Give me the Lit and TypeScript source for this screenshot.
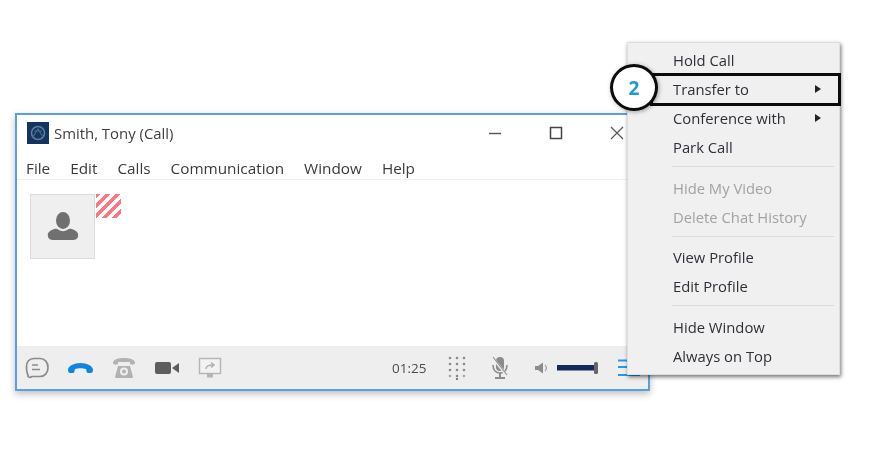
import { LitElement, html, css, svg } from "lit";
import { customElement } from "lit/decorators.js";

const ico = (w: number, h: number, body: unknown) =>
  html`<svg width=${w} height=${h} viewBox="0 0 ${w} ${h}">${body}</svg>`;

const dots = [3, 9, 15].flatMap((y) =>
  [2, 9, 16].map((x) => svg`<circle cx=${x} cy=${y} r="1.3" fill="#8a8a8a"/>`)
);

@customElement("app-root")
export class AppRoot extends LitElement {
  static styles = css`
    :host {
      display: block;
      width: 888px;
      height: 454px;
      background: #fff;
      overflow: hidden;
      font-family: "Open Sans", "Noto Sans", sans-serif;
      color: #333;
    }
    .stage {
      position: relative;
      width: 888px;
      height: 454px;
      box-sizing: border-box;
      padding: 113px 0 0 15px;
      filter: blur(0.4px);
    }
    .win {
      width: 635px;
      height: 278px;
      box-sizing: border-box;
      border: 2px solid #5b9fdc;
      background: #fff;
      box-shadow: 0 3px 7px rgba(0, 0, 0, 0.25);
      display: flex;
      flex-direction: column;
    }
    .title {
      height: 36px;
      flex: none;
      display: flex;
      align-items: center;
      padding-left: 10px;
      gap: 5px;
      font-size: 14.9px;
      color: #3f3f3f;
    }
    .ctrls {
      margin-left: auto;
      display: flex;
      align-items: center;
      padding-right: 24px;
      gap: 47px;
    }
    .ctrls svg { display: block; }
    .menubar {
      height: 29px;
      flex: none;
      display: flex;
      align-items: center;
      gap: 20px;
      padding: 5px 0 0 9px;
      font-size: 15.3px;
      font-weight: 500;
      color: #3a3a3a;
      border-bottom: 1px solid #f0f0f0;
      box-sizing: border-box;
    }
    .body {
      flex: 1;
      padding: 14px 0 0 13px;
      display: flex;
      align-items: flex-start;
    }
    .avatar {
      width: 65px;
      height: 65px;
      background: #efefef;
      border: 1px solid #dcdcdc;
      box-sizing: border-box;
      display: flex;
      align-items: center;
      justify-content: center;
    }
    .stripes {
      width: 25px;
      height: 24px;
      margin-left: 1px;
      background: repeating-linear-gradient(
        135deg,
        #fb7681 0 3.5px,
        #fff 3.5px 7px
      );
    }
    .bar {
      height: 43px;
      flex: none;
      background: #eee;
      display: flex;
      align-items: center;
      padding-left: 8px;
      font-size: 13.5px;
      color: #4d4d4d;
    }
    .bar svg { display: block; flex: none; }
    .left { display: flex; align-items: center; gap: 18px; }
    .time { margin-left: 170px; width: 36px; }
    .dial { margin-left: 20px; }
    .mic { margin-left: 25px; }
    .vol { margin-left: 25px; }
    .menuicon { margin-left: 17px; }
    .menu {
      position: absolute;
      left: 627px;
      top: 42px;
      width: 213px;
      height: 333px;
      box-sizing: border-box;
      background: #f0f0f0;
      border: 1px solid #dedede;
      box-shadow: 1px 2px 4px rgba(0, 0, 0, 0.55);
      padding-top: 3px;
      font-size: 14.8px;
      font-weight: 500;
      color: #2f2f38;
    }
    .item {
      height: 29px;
      line-height: 29px;
      padding-left: 45px;
      position: relative;
    }
    .item.off { color: #a2a2a2; }
    .arrow {
      position: absolute;
      right: 18px;
      top: 10px;
      width: 0;
      height: 0;
      border-left: 6px solid #222;
      border-top: 4px solid transparent;
      border-bottom: 4px solid transparent;
    }
    .sep {
      height: 1px;
      background: #dcdcdc;
      margin: 4px 5px 6.5px 44px;
    }
    .hl {
      position: absolute;
      left: 650px;
      top: 73px;
      width: 191px;
      height: 33px;
      box-sizing: border-box;
      border: 3.5px solid #0c0c0c;
      pointer-events: none;
    }
    .badge {
      position: absolute;
      left: 610px;
      top: 64px;
      width: 48px;
      height: 47px;
      box-sizing: border-box;
      border-radius: 50%;
      border: 3.5px solid #0c0c0c;
      background: #fff;
      box-shadow: 1px 1px 4px rgba(0, 0, 0, 0.35);
      display: flex;
      align-items: center;
      justify-content: center;
      font-size: 19px;
      font-weight: 700;
      color: #1c9ad6;
    }
  `;

  render() {
    return html`<div class="stage">
      <div class="win">
        <div class="title">
          ${ico(22, 22, svg`
            <rect width="22" height="22" fill="#12345f"/>
            <circle cx="11" cy="11" r="6.5" fill="none" stroke="#5f7f9f" stroke-width="1.5"/>
            <path d="M6 15 L11 7 L16 15 M7 9 H15" fill="none" stroke="#46688c" stroke-width="1.2"/>`)}
          <span>Smith, Tony (Call)</span>
          <div class="ctrls">
            ${ico(14, 14, svg`<path d="M1 7.5H13" stroke="#555" stroke-width="1.4"/>`)}
            ${ico(14, 14, svg`<rect x="1.5" y="1.5" width="11" height="11" fill="none" stroke="#444" stroke-width="1.5"/>`)}
            ${ico(14, 14, svg`<path d="M1 1L13 13M13 1L1 13" stroke="#555" stroke-width="1.2"/>`)}
          </div>
        </div>
        <div class="menubar">
          <span>File</span><span>Edit</span><span>Calls</span><span>Communication</span><span>Window</span><span>Help</span>
        </div>
        <div class="body">
          <div class="avatar">
            ${ico(32, 32, svg`
              <ellipse cx="16" cy="9.5" rx="7" ry="8.5" fill="#707070"/>
              <path d="M6 18.5 C8 17 11 18 12 19 C14 20.5 18 20.5 20 19 C21 18 24 17 26 18.5 C29 19.5 32 22 31 25 C31 28 28 29 26 29 H6 C4 29 1 28 1 25 C0 22 3 19.5 6 18.5Z" fill="#707070"/>`)}
          </div>
          <div class="stripes"></div>
        </div>
        <div class="bar">
          <div class="left">
            ${ico(24, 22, svg`
              <path d="M9 1.5H15C20 1.5 23 5.5 23 10.5C23 15.5 20 19.5 15 19.5H7C5.5 20.5 4 20.5 3 19.5C3.5 18.5 3 18 2.5 17C1.5 15 1.5 12 1.5 10C1.5 5 4 1.5 9 1.5Z" fill="none" stroke="#8a8a8a" stroke-width="1.7"/>
              <path d="M7 8H13M7 12.5H15" stroke="#8a8a8a" stroke-width="1.5"/>`)}
            ${ico(27, 14, svg`
              <path d="M1 9C1 5 7 2 13.5 2C20 2 26 5 26 9C26 11 25 12 24 12H21C20 12 19.5 11 19.5 10L19 8C16 7 11 7 8 8L7.5 10C7.5 11 7 12 6 12H3C2 12 1 11 1 9Z" fill="#0f85e0"/>`)}
            ${ico(24, 22, svg`
              <path d="M1 6C1 2 7 1 12 1C17 1 23 2 23 6C23 8 19 8 18 7V5H6V7C5 8 1 8 1 6Z" fill="#b2b2b2"/>
              <path d="M6 9L3 20C3 21 4 21 5 21H19C20 21 21 21 21 20L18 9Z" fill="#b2b2b2"/>
              <circle cx="12" cy="14.5" r="4" fill="#eee"/>
              <circle cx="12" cy="14.5" r="2" fill="#b2b2b2"/>`)}
            ${ico(26, 14, svg`
              <rect x="1" y="1" width="16" height="12" rx="2" fill="#5e5e5e"/>
              <path d="M18 7L25 2V12Z" fill="#5e5e5e"/>`)}
            ${ico(24, 22, svg`
              <rect x="1.5" y="1.5" width="21" height="15" fill="#f2f2f2" stroke="#b5b5b5" stroke-width="1.4"/>
              <path d="M8 12C8 9 10 8 15 8M13 5.5L16 8L13 10.5" fill="none" stroke="#b0b0b0" stroke-width="1.4"/>
              <rect x="9" y="17" width="6" height="3.5" fill="#b5b5b5"/>`)}
          </div>
          <span class="time">01:25</span>
          <span class="dial">${ico(18, 25, svg`
            ${dots}
            <circle cx="2" cy="21" r="1.3" fill="#a5a5a5"/>
            <circle cx="9" cy="21" r="1.3" fill="#8a8a8a"/>
            <circle cx="16" cy="21" r="1.3" fill="#a5a5a5"/>
            <circle cx="9" cy="24" r="1" fill="#555"/>`)}</span>
          <span class="mic">${ico(18, 24, svg`
            <rect x="5" y="1" width="8" height="14" rx="4" fill="#8c8c8c"/>
            <path d="M2 9C2 14 5 17 9 17C13 17 16 14 16 9" fill="none" stroke="#8c8c8c" stroke-width="1.6"/>
            <path d="M9 17V21M4 22H14" stroke="#8c8c8c" stroke-width="2"/>
            <path d="M2 2L16 20" stroke="#eee" stroke-width="2.6"/>
            <path d="M2 1L16 19" stroke="#8c8c8c" stroke-width="1.1"/>`)}</span>
          <span class="vol">${ico(66, 14, svg`
            <path d="M1 5H4L9 1.5V12.5L4 9H1Z" fill="#8c8c8c"/>
            <path d="M11 4C13 6 13 8 11 10" fill="none" stroke="#aaa" stroke-width="1.3"/>
            <rect x="23" y="4" width="38" height="5.5" fill="#14295c"/>
            <rect x="60" y="1" width="4" height="12" rx="1.5" fill="#666"/>`)}</span>
          <span class="menuicon">${ico(23, 20, svg`
            <path d="M1 2.5H23M1 9H23M1 17H23" stroke="#1f9bee" stroke-width="2.2"/>`)}</span>
        </div>
      </div>

      <div class="menu">
        <div class="item">Hold Call</div>
        <div class="item">Transfer to<span class="arrow"></span></div>
        <div class="item">Conference with<span class="arrow"></span></div>
        <div class="item">Park Call</div>
        <div class="sep"></div>
        <div class="item off">Hide My Video</div>
        <div class="item off">Delete Chat History</div>
        <div class="sep"></div>
        <div class="item">View Profile</div>
        <div class="item">Edit Profile</div>
        <div class="sep"></div>
        <div class="item">Hide Window</div>
        <div class="item">Always on Top</div>
      </div>
      <div class="hl"></div>
      <div class="badge">2</div>
    </div>`;
  }
}
